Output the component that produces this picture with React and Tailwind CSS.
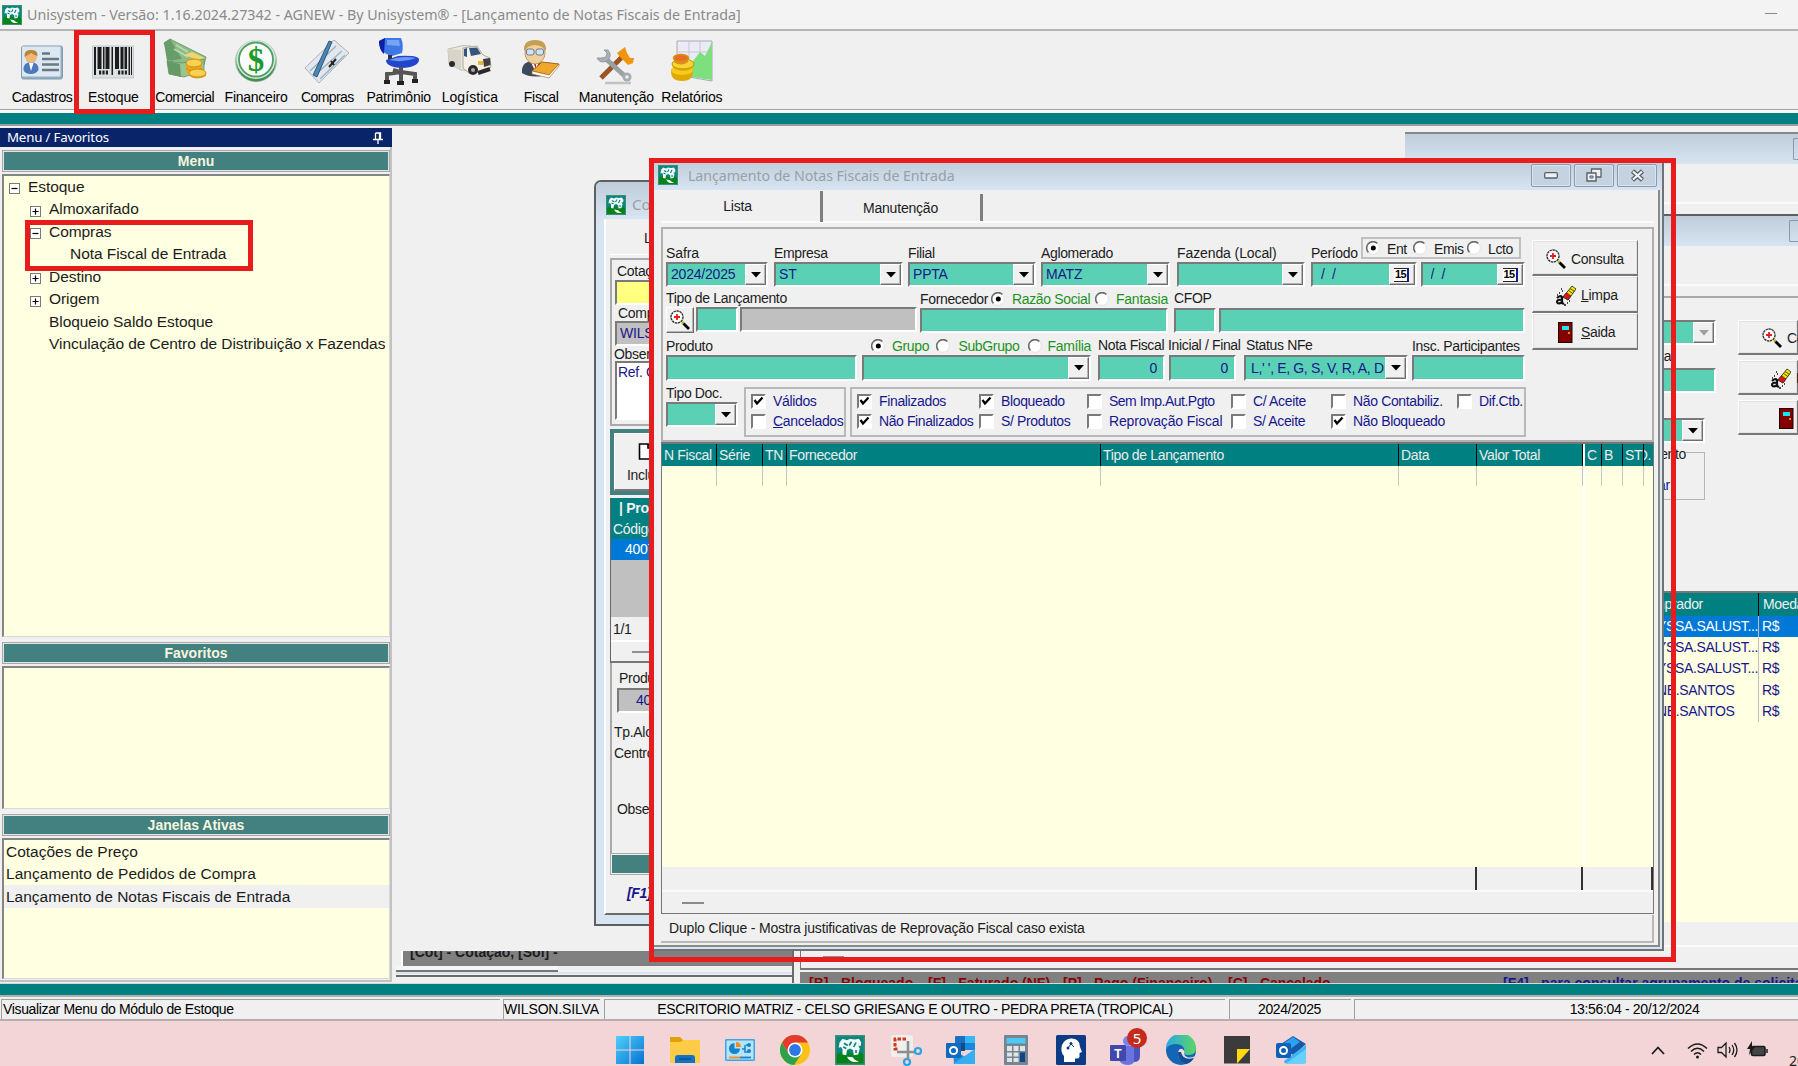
import React from "react";
import clsx from "clsx";

/* ---------- primitives ---------- */

const RAISED = "bg-[#f0f0f0] border border-t-white border-l-white border-r-[#6e6e6e] border-b-[#6e6e6e] shadow-[inset_-1px_-1px_0_#b4b4b4]";
const SUNKEN = "border-2 border-t-[#7a7a7a] border-l-[#7a7a7a] border-r-white border-b-white";

function AppIcon({ size = 20 }) {
  return (
    <svg width={size} height={size} viewBox="0 0 20 20" className="shrink-0">
      <rect width="20" height="20" fill="#3f8f73" />
      <rect x="1" y="1" width="18" height="12" fill="#0a8580" />
      <path d="M1 13Q6 9.500 11 12.500Q15 10 19 13V19H1Z" fill="#04821c" />
      <path d="M3 5L5 2.500L8 3.500L10 2.500L13 3L16 2.500L17.500 5L17 7.500L15.500 7L16.500 9L15.500 13L12.500 13.500L12 10L10 9L8 10L7.500 13.500L5 13L5 9.500L4 8L2.500 8.500Z" fill="#eef8f5" />
      <path d="M6 5.500L8.500 7M11 4.500L9.500 7M14 5L12.500 8M5.500 8L7.500 9M14 10v2" stroke="#0a7f78" strokeWidth="1.100" />
      <path d="M8 14.500Q13 14.500 12.500 16L16 18H12Q9 17 8 14.500Z" fill="#fff" />
    </svg>
  );
}

function Magnifier() {
  return (
    <svg width="20" height="20" viewBox="0 0 20 20" className="shrink-0">
      <circle cx="7" cy="7" r="6" fill="#fff" stroke="#333" strokeWidth="1.4" strokeDasharray="2.4 .6" />
      <path d="M7 4v6M4 7h6" stroke="#e0201c" strokeWidth="1.8" />
      <path d="M12 12l1.5 1.5" stroke="#c9b400" strokeWidth="2.5" />
      <path d="M13.5 13.5L19 19" stroke="#000" strokeWidth="2.8" />
    </svg>
  );
}

function Eraser() {
  return (
    <svg width="21" height="21" viewBox="0 0 21 21" className="shrink-0">
      <path d="M2 13 Q5 10 7 12 L7 18 L9 19 M7 15 Q2 14 2 17 Q3 20 7 17" fill="none" stroke="#111" strokeWidth="2.2" />
      <path d="M4 8h1M7 6h1M2 10h1M9 20h2M12 18h1M14 16h1M6 4h1" stroke="#111" strokeWidth="1.4" />
      <path d="M8 12L17 1L21 4L13 15Z" fill="#f3e400" stroke="#222" strokeWidth=".8" />
      <path d="M8 12L11.500 7.700L16 11L13 15Z" fill="#e0101c" stroke="#222" strokeWidth=".6" />
      <path d="M15 3.500L19.500 6.500M13.500 5.500L17.800 8.500" stroke="#222" strokeWidth=".7" />
    </svg>
  );
}

function Door() {
  return (
    <svg width="15" height="21" viewBox="0 0 15 21" className="shrink-0">
      <rect x=".5" y=".5" width="13.500" height="20" fill="#840000" stroke="#200" />
      <rect x="4" y="4" width="7" height="4" fill="#17e6f5" />
      <circle cx="11" cy="11" r="1" fill="#e5d000" />
    </svg>
  );
}

function CalIcon() {
  return (
    <span className="flex h-[14px] w-[15px] items-center justify-center border-t border-r-2 border-b border-[#222] border-r-[#1a1a8c] bg-white font-['Liberation_Sans'] text-[11px] leading-none font-bold tracking-[-0.5px] text-black">
      15
    </span>
  );
}

function DropButton({ disabled }) {
  return (
    <span className={clsx(RAISED, "flex h-full w-[21px] shrink-0 items-center justify-center")}>
      <svg width="10" height="6" viewBox="0 0 10 6">
        <path d="M0 0h10L5 5.500z" fill={disabled ? "#a0a0a0" : "#000"} />
      </svg>
    </span>
  );
}

function Field({ children, className, tone = "bg-[#5ad1b5]", drop, cal, disabled }) {
  return (
    <div className={clsx(SUNKEN, tone, "flex h-[25px] items-center overflow-hidden pl-[3px] text-[14px] tracking-[-0.2px] whitespace-pre text-[#17178c]", (drop || cal) && "border-r-[#7a7a7a] border-b-[#8a8a8a]", className)}>
      <span className="flex-1 overflow-hidden">{children}</span>
      {drop && <DropButton disabled={disabled} />}
      {cal && (
        <span className={clsx(RAISED, "flex h-full w-[26px] shrink-0 items-center justify-center")}>
          <CalIcon />
        </span>
      )}
    </div>
  );
}

function Label({ children, className }) {
  return <div className={clsx("flex h-[18px] items-center whitespace-nowrap text-[14px] text-[#1c1c1c]", className)}>{children}</div>;
}

function Column({ label, className, children }) {
  return (
    <div className={clsx("flex shrink-0 flex-col justify-end", className)}>
      {label}
      {children}
    </div>
  );
}

function Radio({ on, className }) {
  return (
    <svg width="14" height="14" viewBox="0 0 14 14" className={clsx("shrink-0", className)}>
      <circle cx="7" cy="7" r="6" fill="#fff" />
      <path d="M2.500 11.500A6.200 6.200 0 0 1 11.500 2.500" fill="none" stroke="#6a6a6a" strokeWidth="1.600" />
      <path d="M2.500 11.500A6.200 6.200 0 0 0 11.500 2.500" fill="none" stroke="#e4e4e4" strokeWidth="1" />
      {on && <circle cx="7.300" cy="7" r="2.500" fill="#000" />}
    </svg>
  );
}

function Check({ on, children, className }) {
  return (
    <div className={clsx("flex h-[20px] shrink-0 items-center whitespace-nowrap text-[14px] text-[#17178c]", className)}>
      <span className={clsx(SUNKEN, "mr-[7px] flex size-[15px] shrink-0 items-center justify-center border-r-[#f0f0f0] border-b-[#f0f0f0] bg-white")}>
        {on && (
          <svg width="11" height="10" viewBox="0 0 11 10" className="shrink-0">
            <path d="M1.500 4L4 7.500L9.500 1.500" fill="none" stroke="#000" strokeWidth="2.300" />
          </svg>
        )}
      </span>
      {children}
    </div>
  );
}

function ActionButton({ icon, children, className }) {
  return (
    <div className={clsx("flex items-center border border-t-white border-l-white border-r-[#777] border-b-2 border-b-[#777] bg-[#f0f0f0] pt-[2px] text-[14px] tracking-[-0.3px] text-[#1c1c1c] shadow-[inset_0_0_0_1px_#e2e2e2]", className)}>
      {icon}
      {children}
    </div>
  );
}

function CaptionButton({ children }) {
  return (
    <span className="flex h-[23px] w-[40px] shrink-0 items-center justify-center rounded-[2px] border border-[#8b98b0] bg-[#c5d2e0] shadow-[inset_0_0_0_1px_#d8e3ee]">
      {children}
    </span>
  );
}

/* ---------- toolbar ---------- */

const toolIcons = {
  cadastros: (
    <svg width="44" height="48" viewBox="0 0 44 48">
      <rect x="1.500" y="9" width="41" height="33" rx="2" fill="#93adc0" stroke="#7f9db4" />
      <rect x="2" y="9.500" width="38.500" height="30" rx="1" fill="#dce9f2" />
      <path d="M3.500 33Q3 25.500 11 25Q19 25.500 18.500 33Q16 37 11 37Q5 37 3.500 33Z" fill="#4d78bd" />
      <path d="M9 26l2 8l2.500-8z" fill="#fff" />
      <circle cx="11" cy="20" r="6" fill="#f0b878" />
      <path d="M4.500 20Q4 12.500 11 13Q18 12.500 17.500 19Q14 18 11 16Q8 18 4.500 20Z" fill="#b98434" />
      <path d="M22 16.500h8M22 22h17M22 27.500h17M22 33h17" stroke="#6a7884" strokeWidth="2.400" />
    </svg>
  ),
  estoque: (
    <svg width="44" height="48" viewBox="0 0 44 48">
      <rect x="1.500" y="9" width="41" height="32" fill="#dde1e3" stroke="#c3c9cc" />
      <path d="M3 10h2v28h-2zM6.500 10h4v22h-4zM12 10h1.500v22h-1.500zM14.500 10h4v22h-4zM20.500 10h1.500v28h-1.500zM24 10h4v22h-4zM29.500 10h3v22h-3zM33.500 10h2.500v22h-2.500zM37.500 10h1.500v28h-1.500zM40 10h1v28h-1z" fill="#1c1c1c" />
      <path d="M8 35.500h10M27 35.500h9" stroke="#222" strokeWidth="4" strokeDasharray="2.200 1.200" />
    </svg>
  ),
  comercial: (
    <svg width="46" height="48" viewBox="0 0 46 48">
      <path d="M2 6L8 2L32 14L44 20L42 28L10 26Z" fill="#8ebb88" stroke="#5f9061" strokeWidth=".8" />
      <path d="M2 6L8 2L20 22L5 24Z" fill="#679d68" />
      <path d="M14 8l12 7M12 12l14 8" stroke="#b9d9b0" strokeWidth="1.500" />
      <path d="M5 24L20 26L42 22V33L22 40L7 37Z" fill="#9cc493" stroke="#5f9061" strokeWidth=".8" />
      <path d="M5 24L18 27L19 40L7 37Z" fill="#659a66" />
      <path d="M22 18L30 15L43 21L36 23Z" fill="#f1d76a" />
      <path d="M24 27v8q8 6 16 0v-8z" fill="#eaa91f" />
      <ellipse cx="32" cy="26" rx="8" ry="4" fill="#fad050" stroke="#c88f12" />
      <path d="M24 31q8 6 16 0" stroke="#c88f12" fill="none" />
      <path d="M27 36v3q8 5 17 0v-3z" fill="#e2a11a" />
      <ellipse cx="35.500" cy="36" rx="8.500" ry="4" fill="#fad050" stroke="#c88f12" />
    </svg>
  ),
  financeiro: (
    <svg width="46" height="48" viewBox="0 0 46 48">
      <circle cx="23" cy="24" r="21" fill="#a9bbae" />
      <circle cx="23" cy="25" r="19.500" fill="#3f8f52" />
      <circle cx="23" cy="22.500" r="19.500" fill="#d7e6da" />
      <circle cx="23" cy="22.500" r="17" fill="#fbfdfb" stroke="#4fa163" strokeWidth="1.800" />
      <text x="23" y="33.500" textAnchor="middle" fontFamily="Liberation Serif, serif" fontWeight="bold" fontSize="33" fill="#1c9a2c">$</text>
    </svg>
  ),
  compras: (
    <svg width="48" height="48" viewBox="0 0 48 48">
      <path d="M2 31L31 3L46 16L16 46Z" fill="#e2e8ee" stroke="#a8b1ba" />
      <path d="M7 34L33 9M12 38L39 14M17 42L42 18" stroke="#9db2c4" strokeWidth="1.500" />
      <path d="M10 38L26 4L29 5L14 40Z" fill="#4d86b5" stroke="#174468" strokeWidth=".8" />
      <path d="M26 30l7-8M28 24l3 4" stroke="#222" strokeWidth="2" />
    </svg>
  ),
  patrimonio: (
    <svg width="46" height="50" viewBox="0 0 46 50">
      <path d="M3 5L9 2L25 2Q28 9 26 17L16 20Q3 17 3 5Z" fill="#3f78e6" />
      <path d="M3 5L9 2L8 18Q3 14 3 5Z" fill="#0c1fa8" />
      <path d="M11 4L23 4L24 10L11 9Z" fill="#76a3f4" />
      <path d="M14 19v7" stroke="#333" strokeWidth="4" />
      <path d="M10 24L22 20Q44 19 43 24Q42 31 26 32Q10 31 10 24Z" fill="#2146cd" />
      <path d="M13 24Q25 19 40 22Q28 27 13 24Z" fill="#6d97f2" />
      <path d="M25 31v8M25 36L11 38v6M25 36L39 38v5M25 37v10M24 36L17 34" stroke="#555" strokeWidth="4" fill="none" />
      <path d="M8 46h6M21 47h7M36 45h6" stroke="#222" strokeWidth="4" />
    </svg>
  ),
  logistica: (
    <svg width="46" height="48" viewBox="0 0 46 48">
      <path d="M1 12L16 8.500L24 9V34L14 33L2 27Z" fill="#ece7dc" stroke="#b7b2a7" strokeWidth=".8" />
      <path d="M1 12L14 13V33L2 27Z" fill="#d9d4c8" />
      <path d="M16 11L30 9L36 18L43 21L44 30L38 35L22 36L16 31Z" fill="#f5f1e8" stroke="#9d998f" strokeWidth=".8" />
      <path d="M17 12L20 11V20L17 19ZM22 11L30 10.500L34 17L24 19Z" fill="#35557f" />
      <path d="M36 22L43 21L43.500 28L37 30Z" fill="#3f3f3f" />
      <path d="M31 24h5v4h-5z" fill="#e5b93b" />
      <circle cx="26" cy="33" r="5" fill="#2b2b2b" /><circle cx="26" cy="33" r="2" fill="#aaa" />
      <circle cx="5" cy="27" r="3" fill="#2b2b2b" />
      <path d="M31 36L43 32" stroke="#2b2b2b" strokeWidth="4" />
    </svg>
  ),
  fiscal: (
    <svg width="46" height="48" viewBox="0 0 46 48">
      <path d="M4 36Q3 25 14 24Q25 23 27 32L24 39Q12 41 4 36Z" fill="#3d4a5c" />
      <path d="M13 25L17 34L21 25Z" fill="#fff" /><path d="M16 27h2l0 6z" fill="#b22" />
      <ellipse cx="17" cy="16" rx="10" ry="11" fill="#f0cf9a" stroke="#a98a55" strokeWidth=".8" />
      <path d="M6 14Q5 3 17 3Q29 3 28 14Q24 8 17 8Q10 8 6 14Z" fill="#c3a052" />
      <rect x="8.500" y="12" width="7.500" height="6" rx="2" fill="#cfe3f4" stroke="#6a7f95" />
      <rect x="18" y="12" width="7.500" height="6" rx="2" fill="#cfe3f4" stroke="#6a7f95" />
      <path d="M14 34L24 25L41 27L31 38Z" fill="#f0a62c" stroke="#a0661a" />
      <path d="M14 34L31 38L41 27V29L31 41L14 37Z" fill="#fff" stroke="#a0661a" strokeWidth=".6" />
    </svg>
  ),
  manutencao: (
    <svg width="46" height="48" viewBox="0 0 46 48">
      <path d="M12 46h26" stroke="#c2c2c2" strokeWidth="2.500" />
      <path d="M8 41L29 20" stroke="#9a5520" strokeWidth="5" />
      <path d="M24 16L32 10L34 16L37 21L41 21L40 26L35 28L27 20Z" fill="#f0950e" />
      <path d="M12 21L34 41" stroke="#9aa0a5" strokeWidth="5" />
      <path d="M4 21Q7 27 14 24Q20 19 15 13L11 13L14 16L13 20L9 21Z" fill="#aab0b5" stroke="#8a9095" strokeWidth=".8" />
      <circle cx="34" cy="40" r="4.500" fill="#a5abb0" /><circle cx="34" cy="40" r="1.800" fill="#f0f0f0" />
    </svg>
  ),
  relatorios: (
    <svg width="46" height="48" viewBox="0 0 46 48">
      <path d="M8 4H43V44L8 38Z" fill="#eceaf5" stroke="#aaa8b8" />
      <path d="M20 4v34M31 4v36M8 15h35" stroke="#c9c5da" />
      <path d="M22 38L24 24L31 15L36 19L43 5V43L22 40Z" fill="#7de07d" />
      <path d="M2 35q0 9 11 9t11-9v-3H2z" fill="#e0a800" />
      <ellipse cx="13" cy="33" rx="11" ry="5" fill="#f4cb1e" />
      <path d="M3 26q0 8 11 8t11-8z" fill="#e5ae05" />
      <ellipse cx="14" cy="27" rx="11" ry="5" fill="#f8d534" stroke="#c79200" />
      <path d="M5 21v4q7 5 14 0v-4z" fill="#e58a1c" />
      <ellipse cx="12" cy="21" rx="7.500" ry="3.500" fill="#ee6a24" stroke="#cf9410" strokeWidth="1.500" />
    </svg>
  ),
};

const tools = [
  ["cadastros", "Cadastros", "w-[71.300px]", "tracking-[-0.350px]"],
  ["estoque", "Estoque", "w-[71.300px]", "tracking-[-0.100px]"],
  ["comercial", "Comercial", "w-[71.300px]", "tracking-[-0.450px]"],
  ["financeiro", "Financeiro", "w-[71.300px]", "tracking-[-0.250px]"],
  ["compras", "Compras", "w-[71.300px]", "tracking-[-0.600px]"],
  ["patrimonio", "Patrimônio", "w-[71.300px]", "tracking-[-0.250px]"],
  ["logistica", "Logística", "w-[71.300px]", "tracking-[0.050px]"],
  ["fiscal", "Fiscal", "w-[71.300px]", "tracking-[-0.300px]"],
  ["manutencao", "Manutenção", "w-[79px]", "tracking-[-0.200px]"],
  ["relatorios", "Relatórios", "w-[72px]", "tracking-[-0.200px]"],
];

function Toolbar() {
  return (
    <div className="flex h-[81px] shrink-0 border-t-2 border-b border-t-[#b5b5b5] border-b-[#a5a5a5] bg-[#f0f0f0] pl-[6.500px]">
      {tools.map(([id, name, w, track]) => (
        <div key={id} className={clsx("relative flex flex-col items-center pt-[5px]", w)}>
          <div className="flex h-[50px] items-center justify-center">{toolIcons[id]}</div>
          <div className={clsx("mt-[1px] text-[14px] leading-[20px] whitespace-nowrap text-black", track)}>{name}</div>
          {id === "estoque" && <div className="absolute -top-px -left-[4px] h-[84px] w-[81px] border-5 border-[#e81c1c]" />}
        </div>
      ))}
    </div>
  );
}

/* ---------- left dock ---------- */

function SectionTitle({ children }) {
  return (
    <div className="ml-[2px] flex h-[22px] w-[388px] shrink-0 items-center justify-center border border-[#a8a8a8] bg-[#438080] text-[14px] font-bold text-[#f6f6dc] shadow-[inset_0_0_0_1px_#e4e4e4]">
      {children}
    </div>
  );
}

const tree = [
  ["−", "Estoque", "pl-[5px]"],
  ["+", "Almoxarifado", "pl-[26px]"],
  ["−", "Compras", "pl-[26px]"],
  ["", "Nota Fiscal de Entrada", "pl-[66px]"],
  ["+", "Destino", "pl-[26px]"],
  ["+", "Origem", "pl-[26px]"],
  ["", "Bloqueio Saldo Estoque", "pl-[45px]"],
  ["", "Vinculação de Centro de Distribuição x Fazendas", "pl-[45px]"],
];

function SideDock() {
  const list = "ml-[2px] w-[388px] shrink-0 border border-t-2 border-l-2 border-t-[#858585] border-l-[#858585] border-r-[#d8d8d8] border-b-[#d8d8d8] bg-[#ffffe1]";
  return (
    <div className="flex w-[392px] shrink-0 flex-col">
      <div className="mt-[2px] flex h-[19px] shrink-0 items-center justify-between bg-[#0a246a] pt-[1px] pr-[9px] pl-[7px] text-white">
        <span className="font-['Noto_Sans'] text-[13.300px] tracking-[-0.200px]">Menu / Favoritos</span>
        <svg width="10" height="12" viewBox="0 0 10 12">
          <path d="M2.500 1h5v6M2.500 1v6M0 7.500h10M5 8v4M6.500 1v6" fill="none" stroke="#fff" strokeWidth="1.300" />
        </svg>
      </div>
      <div className="flex h-[835px] flex-col border-r-2 border-b-2 border-[#c2c2c2] pt-[3px]">
        <SectionTitle>Menu</SectionTitle>
        <div className={clsx(list, "relative mt-[2px] h-[463px] overflow-hidden")}>
          {tree.map(([mark, name, pad]) => (
            <div key={name} className={clsx("flex h-[22.500px] items-center text-[15.500px] tracking-[-0.060px] whitespace-nowrap text-[#1c1c1c]", pad)}>
              {mark && (
                <svg width="11" height="11" viewBox="0 0 11 11" className="mt-[3px] mr-[8px] shrink-0">
                  <rect x=".5" y=".5" width="10" height="10" fill="#fff" stroke="#7a7a7a" />
                  <path d={mark === "+" ? "M2.500 5.500h6M5.500 2.500v6" : "M2.500 5.500h6"} stroke="#000" strokeWidth="1.200" />
                </svg>
              )}
              <span className="-mt-[2px]">{name}</span>
            </div>
          ))}
          <div className="absolute top-[44px] left-[21px] h-[51px] w-[228px] border-5 border-[#e81c1c]" />
        </div>
        <div className="mt-[5px] flex flex-col">
          <SectionTitle>Favoritos</SectionTitle>
          <div className={clsx(list, "mt-[2px] h-[143px]")} />
        </div>
        <div className="mt-[5px] flex flex-col">
          <SectionTitle>Janelas Ativas</SectionTitle>
          <div className={clsx(list, "mt-[2px] h-[141px] text-[15.500px] whitespace-nowrap text-[#1c1c1c]")}>
            <div className="flex h-[22.500px] items-center pl-[2px]">Cotações de Preço</div>
            <div className="flex h-[22.500px] items-center pl-[2px] tracking-[0.060px]">Lançamento de Pedidos de Compra</div>
            <div className="flex h-[22.500px] items-center bg-[#f0f0f0] pl-[2px]">Lançamento de Notas Fiscais de Entrada</div>
          </div>
        </div>
      </div>
    </div>
  );
}

/* ---------- background windows ---------- */

function QuoteWindow() {
  return (
    <div className="absolute top-[54px] left-[594px] flex h-[746px] w-[58px] flex-col overflow-hidden rounded-tl-[7px] border-2 border-r-0 border-[#5c5f63] bg-[#d7e4f2]">
      <div className="flex h-[37px] shrink-0 items-center bg-gradient-to-b from-[#bfcddb] to-[#d7e4f2] pt-[8px] pl-[10px]">
        <AppIcon />
        <span className="ml-[6px] font-['Noto_Sans'] text-[15px] text-[#9a9fa6]">Cotações</span>
      </div>
      <div className="ml-[8px] flex h-[696px] shrink-0 flex-col border-b-2 border-l-2 border-b-[#6b6b6b] border-l-white bg-[#f0f0f0] pl-[4px] text-[14px] tracking-[-0.300px] whitespace-nowrap text-[#1c1c1c]">
        <div className="flex h-[36px] shrink-0 items-center border-b border-[#fff] pt-[4px] pl-[34px]">Lista</div>
        <div className="mt-[3px] flex h-[168px] shrink-0 flex-col border-2 border-r-0 border-[#a9a9a9] pl-[3px]">
          <div className="mt-[1px] h-[19px] pl-[2px]">Cotação</div>
          <Field tone="bg-[#ffff80]" className="shrink-0" />
          <div className="mt-[-2px] h-[18px] pl-[3px]">Comprador</div>
          <Field tone="bg-[#c0c0c0]" className="shrink-0 pl-[1px]">WILSON</Field>
          <div className="mt-[-2px] -ml-px h-[17px]">Observação</div>
          <div className={clsx(SUNKEN, "h-[59px] shrink-0 bg-white pl-[1px] leading-[19px] text-[#17178c]")}>Ref. COT</div>
        </div>
        <div className="mt-[3px] flex h-[66px] shrink-0 border-4 border-r-0 border-[#438080]">
          <div className="flex flex-1 flex-col border-t border-l border-b-2 border-t-white border-l-white border-b-[#777] pt-[9px] pl-[12px]">
            <svg width="20" height="17" viewBox="0 0 20 17" className="ml-[11px] shrink-0">
              <path d="M1.500 1H10V5H15V16H1.500ZM10 1L15 5" fill="#fff" stroke="#000" strokeWidth="1.600" />
            </svg>
            <span className="mt-[5px]">Incluir</span>
          </div>
        </div>
        <div className="mt-[3px] flex shrink-0 flex-col border-l border-[#666]">
          <div className="h-[21px] bg-[#008080] pl-[8px] text-[14px] font-bold text-[#f0f0f0]">| Produtos</div>
          <div className="h-[20px] bg-[#008080] pl-[2px] leading-[20px] text-[#f0f0f0]">Código</div>
          <div className="h-[21px] bg-[#0078d7] pl-[14px] leading-[21px] text-white">4007</div>
          <div className="h-[57px] bg-[#c0c0c0]" />
          <div className="h-[25px] border-b-2 border-white pl-[2px] leading-[24px]">1/1</div>
          <div className="flex h-[21px] items-center border-b-2 border-[#777] pl-[21px]">
            <div className="h-[2px] w-[40px] bg-[#909090]" />
          </div>
        </div>
        <div className="flex h-[190px] shrink-0 flex-col border-l-2 border-[#a9a9a9] pl-[2px]">
          <div className="mt-[5px] h-[20px] pl-[5px]">Produto</div>
          <Field tone="bg-[#c0c0c0]" className="ml-[3px] shrink-0 pl-[17px]">4007</Field>
          <div className="mt-[9px] h-[21px]">Tp.Aloc.</div>
          <div className="h-[56px]">Centro</div>
          <div className="pl-[3px]">Observ.</div>
        </div>
        <div className="flex h-[22px] shrink-0 border border-[#a9a9a9] bg-[#438080] shadow-[inset_0_0_0_1px_#f0f0f0]" />
        <div className="mt-[8px] pl-[17px] font-bold text-[#17178c] italic">[F1]</div>
      </div>
    </div>
  );
}

const buyers = [
  ["YSSA.SALUST...", "R$"],
  ["YSSA.SALUST...", "R$"],
  ["YSSA.SALUST...", "R$"],
  ["NE.SANTOS", "R$"],
  ["NE.SANTOS", "R$"],
];

function OrdersWindow() {
  return (
    <div className="absolute top-[88px] left-[1600px] flex h-[773px] w-[198px] flex-col overflow-hidden border-t-2 border-[#5c5f63] bg-[#f0f0f0] text-[14px] tracking-[-0.350px] whitespace-nowrap text-[#1c1c1c]">
      <div className="flex h-[30px] shrink-0 justify-end bg-gradient-to-b from-[#bfcddb] to-[#d7e4f2] pt-[4px]">
        <span className="h-[22px] w-[9px] rounded-l-[2px] border border-r-0 border-[#8b98b0]" />
      </div>
      <div className="h-[40px] shrink-0 border-b-2 border-[#fafafa]" />
      <div className="mt-[10px] flex h-[295px] shrink-0 justify-between border-t-2 border-[#a9a9a9]">
        <div className="flex w-[116px] flex-col pt-[22px]">
          <Field drop disabled className="shrink-0" />
          <div className="flex h-[23px] items-center pl-[46px]">Total</div>
          <Field className="shrink-0 border-r-[#888] border-b-[#888]" />
          <Field drop className="mt-[25px] mr-[11px] shrink-0" />
          <div className="relative mt-[9px] mr-[11px] flex h-[48px] items-end border border-[#b5b5b5] pb-[3px] pl-[57px]">
            <span className="text-[#17178c]">ar</span>
            <span className="absolute -top-[9px] right-[18px] bg-[#f0f0f0]">Pagamento</span>
          </div>
        </div>
        <div className="flex w-[60px] flex-col gap-[5px] pt-[22px]">
          <ActionButton className="h-[35px] shrink-0 pl-[23px]" icon={<Magnifier />}><span className="ml-[5px]">Consulta</span></ActionButton>
          <ActionButton className="h-[35px] shrink-0 pl-[31px]" icon={<Eraser />}><span className="ml-[5px]">Limpa</span></ActionButton>
          <ActionButton className="h-[35px] shrink-0 pl-[40px]" icon={<Door />} />
        </div>
      </div>
      <div className="grid shrink-0 grid-cols-[159px_1fr] border-t-2 border-[#777] text-[#f0f0f0]">
        <div className="flex h-[23px] items-center border-r border-black bg-[#008080] pl-[36px]">Comprador</div>
        <div className="flex items-center bg-[#008080] pl-[4px]">Moeda</div>
      </div>
      <div className="flex h-[306px] shrink-0 flex-col bg-[#ffffe1]">
        {buyers.map(([who, coin], i) => (
          <div key={i} className={clsx("grid h-[21.200px] grid-cols-[159px_1fr] items-center", i === 0 ? "bg-[#0078d7] text-white" : "text-[#17178c]")}>
            <div className={clsx("flex h-full items-center border-r border-[#c0c0c0]", i < 3 ? "justify-end" : "pl-[57px]")}>{who}</div>
            <div className="pl-[3px]">{coin}</div>
          </div>
        ))}
      </div>
      <div className="h-[25px] shrink-0 border-b-2 border-[#fafafa]" />
    </div>
  );
}

function BackWindows() {
  return (
    <>
      <div className="absolute top-[6px] left-[1405px] flex h-[82px] w-[393px] flex-col border-t-2 border-[#85898e] bg-[#f0f0f0]">
        <div className="flex h-[30px] shrink-0 justify-end bg-gradient-to-b from-[#bfcddb] to-[#d7e4f2] pt-[4px]">
          <span className="h-[22px] w-[5px] rounded-l-[2px] border border-r-0 border-[#8b98b0]" />
        </div>
        <div className="h-[40px] border-b-2 border-[#fafafa]" />
      </div>
      <OrdersWindow />
      {/* lower edges of the windows that sit behind */}
      <div className="absolute top-[825px] left-[396px] flex h-[26px] w-[396px] flex-col overflow-hidden border-b-2 border-[#6b6b6b]">
        <div className="ml-[5px] flex h-[15px] shrink-0 overflow-hidden border-l-2 border-white bg-[#808080] pl-[7px]">
          <span className="-mt-[9px] text-[14px] leading-[20px] font-bold whitespace-pre text-[#1c1c1c]">[Cot] - Cotação, [Sol] - </span>
        </div>
        <div className="h-[6px] w-[162px] shrink-0 border-b-2 border-[#777] bg-[#f6f6f6]" />
        <div className="h-[2px] bg-[#d7e4f2]" />
      </div>
      <div className="absolute top-[825px] left-[792px] flex h-[33px] w-[1006px] flex-col border-l-2 border-[#6b6b6b] bg-[#f0f0f0] pl-[6px]">
        <div className="flex h-[19px] shrink-0 border-b-2 border-l border-[#777] pt-[5px] pl-[22px]">
          <div className="h-[2px] w-[21px] bg-[#909090]" />
        </div>
        <div className="mt-[2px] flex h-[12px] shrink-0 overflow-hidden bg-[#808080] pl-[9px] text-[14px] leading-[20px] font-bold whitespace-nowrap text-[#8b0000]">
          <span className="mt-[1px] w-[119px] shrink-0">[B] - Bloqueado</span>
          <span className="mt-[1px] w-[135px] shrink-0">[F] - Faturado (NF)</span>
          <span className="mt-[1px] w-[165px] shrink-0">[P] - Pago (Financeiro)</span>
          <span className="mt-[1px] w-[275px] shrink-0">[C] - Cancelado</span>
          <span className="mt-[1px] shrink-0 text-[#17178c]">[F4] - para consultar agrupamento de solicitações</span>
        </div>
      </div>
    </>
  );
}

/* ---------- invoice window ---------- */

const gridHead = ["N Fiscal", "Série", "TN", "Fornecedor", "Tipo de Lançamento", "Data", "Valor Total", "C", "B", "ST", "D."];
const GRID_COLS = "grid grid-cols-[55px_46px_24px_314px_298px_78px_106px_19px_21px_21px_1fr]";

function InvoiceForm() {
  return (
    <div className="flex h-[215px] shrink-0 justify-between border-2 border-[#b0b0b0] pr-[14px] pl-[3px] tracking-[-0.350px]">
      <div className="flex w-[861px] flex-col">
        <div className="mt-[8px] flex h-[50px] items-end">
          <Column className="w-[102px]" label={<Label className="tracking-[-0.100px]">Safra</Label>}><Field drop>2024/2025</Field></Column>
          <Column className="ml-[6px] w-[129px]" label={<Label>Empresa</Label>}><Field drop>ST</Field></Column>
          <Column className="ml-[5px] w-[128px]" label={<Label>Filial</Label>}><Field drop>PPTA</Field></Column>
          <Column className="ml-[5px] w-[129px]" label={<Label>Aglomerado</Label>}><Field drop>MATZ</Field></Column>
          <Column className="ml-[7px] w-[128px]" label={<Label className="tracking-[-0.100px]">Fazenda (Local)</Label>}><Field drop /></Column>
          <Column
            className="ml-[6px] w-[214px]"
            label={
              <div className="flex items-end">
                <Label className="w-[50px]">Período</Label>
                <div className="mb-[3px] flex h-[22px] w-[160px] items-center border-2 border-[#c0c0c0] pl-[3px] text-[14px] tracking-[-0.400px] text-[#1c1c1c]">
                  <Radio on /><span className="mt-[2px] ml-[7px] w-[26px]">Ent</span>
                  <Radio /><span className="mt-[2px] ml-[7px] w-[33px]">Emis</span>
                  <Radio /><span className="mt-[2px] ml-[7px]">Lcto</span>
                </div>
              </div>
            }
          >
            <div className="flex gap-[4px]">
              <Field cal className="w-[106px] pl-[8px]">/  /</Field>
              <Field cal className="w-[105px] pl-[8px]">/  /</Field>
            </div>
          </Column>
        </div>

        <div className="flex h-[46px] items-end">
          <Column className="w-[251px]" label={<Label>Tipo de Lançamento</Label>}>
            <div className="flex gap-[2px]">
              <span className={clsx(RAISED, "flex h-[26px] w-[28px] items-center justify-center")}><Magnifier /></span>
              <Field className="w-[42px]" />
              <Field className="w-[178px]" tone="bg-[#c0c0c0]" />
            </div>
          </Column>
          <Column
            className="ml-[3px] w-[248px]"
            label={
              <Label>
                <span className="w-[71px]">Fornecedor</span>
                <Radio on /><span className="ml-[7px] w-[83px] text-[#1d931d]">Razão Social</span>
                <Radio /><span className="ml-[7px] tracking-[-0.200px] text-[#1d931d]">Fantasia</span>
              </Label>
            }
          >
            <Field />
          </Column>
          <Column className="ml-[6px] w-[42px]" label={<Label className="-mt-px mb-px">CFOP</Label>}><Field /></Column>
          <Column className="ml-[3px] w-[306px]"><Field /></Column>
        </div>

        <div className="flex h-[48px] items-end">
          <Column className="w-[191px]" label={<Label>Produto</Label>}><Field className="h-[26px]" /></Column>
          <Column
            className="ml-[5px] w-[229px]"
            label={
              <Label className="pl-[9px]">
                <Radio on /><span className="ml-[7px] w-[45px] text-[#1d931d]">Grupo</span>
                <Radio /><span className="ml-[8px] w-[70px] text-[#1d931d]">SubGrupo</span>
                <Radio /><span className="ml-[6px] text-[#1d931d]">Família</span>
              </Label>
            }
          >
            <Field drop className="h-[26px]" />
          </Column>
          <Column className="ml-[7px] w-[67px]" label={<Label className="mb-px">Nota Fiscal</Label>}><Field className="h-[26px] pr-[6px] text-right">0</Field></Column>
          <Column className="ml-[4px] w-[67px]" label={<Label className="-ml-px mb-px">Inicial / Final</Label>}><Field className="h-[26px] pr-[6px] text-right">0</Field></Column>
          <Column className="ml-[8px] w-[164px]" label={<Label className="mb-px pl-[2px]">Status NFe</Label>}><Field drop className="h-[26px] pl-[5px] tracking-[-0.350px]">L,' ', E, G, S, V, R, A, D</Field></Column>
          <Column className="ml-[4px] w-[113px]" label={<Label>Insc. Participantes</Label>}><Field className="h-[26px]" /></Column>
        </div>

        <div className="flex">
          <Column className="mt-[3px] w-[72px] justify-start" label={<Label>Tipo Doc.</Label>}><Field drop /></Column>
          <div className="mt-[6px] ml-[6px] flex h-[50px] w-[102px] shrink-0 flex-col border-2 border-[#b8b8b8] pt-[2px] pl-[5px]">
            <Check on>Válidos</Check>
            <Check><span><u>C</u>ancelados</span></Check>
          </div>
          <div className="mt-[6px] ml-[4px] grid h-[50px] w-[676px] shrink-0 grid-cols-[122px_108px_144px_100px_126px_60px] grid-rows-[20px_20px] border-2 border-[#b8b8b8] pt-[2px] pl-[5px]">
            <Check on>Finalizados</Check>
            <Check on>Bloqueado</Check>
            <Check className="tracking-[-0.500px]">Sem Imp.Aut.Pgto</Check>
            <Check>C/ Aceite</Check>
            <Check>Não Contabiliz.</Check>
            <Check>Dif.Ctb.</Check>
            <Check on className="tracking-[-0.400px]">Não Finalizados</Check>
            <Check>S/ Produtos</Check>
            <Check className="tracking-[-0.150px]">Reprovação Fiscal</Check>
            <Check>S/ Aceite</Check>
            <Check on>Não Bloqueado</Check>
          </div>
        </div>
      </div>

      <div className="mt-[11px] flex w-[106px] flex-col">
        <ActionButton className="h-[36px] pl-[13px]" icon={<Magnifier />}><span className="mt-[1px] ml-[5px]">Consulta</span></ActionButton>
        <ActionButton className="h-[37px] pl-[22px]" icon={<Eraser />}><span className="mt-[1px] ml-[5px]"><u>L</u>impa</span></ActionButton>
        <ActionButton className="h-[37px] pl-[25px]" icon={<Door />}><span className="mt-[1px] ml-[8px]"><u>S</u>aida</span></ActionButton>
      </div>
    </div>
  );
}

function InvoiceWindow() {
  return (
    <div className="absolute top-[34px] left-[652px] flex h-[791px] w-[1012px] flex-col border-r-2 border-b-2 border-[#6f7276] bg-[#d7e4f2]">
      <div className="flex h-[30px] shrink-0 items-center justify-between bg-gradient-to-b from-[#bfcddb] to-[#d7e4f2] pr-[5px] pl-[6px]">
        <div className="flex items-center">
          <AppIcon />
          <span className="mt-[2px] ml-[10px] font-['Noto_Sans'] text-[14.200px] tracking-[-0.060px] whitespace-nowrap text-[#9a9fa6]">Lançamento de Notas Fiscais de Entrada</span>
        </div>
        <div className="flex gap-[3px]">
          <CaptionButton>
            <svg width="14" height="7" viewBox="0 0 14 7"><rect x=".7" y=".7" width="12.600" height="5.300" rx="1" fill="#eef2f6" stroke="#5a6068" strokeWidth="1.300" /></svg>
          </CaptionButton>
          <CaptionButton>
            <svg width="16" height="14" viewBox="0 0 16 14">
              <path d="M5.500 1h9.500v8h-9.500z" fill="#eef2f6" stroke="#5a6068" strokeWidth="1.300" />
              <path d="M1 5h9v8h-9z" fill="#eef2f6" stroke="#5a6068" strokeWidth="1.400" />
              <path d="M4 8h3v2h-3z" fill="#c5d2e0" stroke="#5a6068" />
            </svg>
          </CaptionButton>
          <CaptionButton>
            <svg width="15" height="13" viewBox="0 0 15 13">
              <path d="M2.500 2L12.500 11M12.500 2L2.500 11" stroke="#5a6068" strokeWidth="4.600" />
              <path d="M3 2.500L12 10.500M12 2.500L3 10.500" stroke="#eef2f6" strokeWidth="2.200" />
            </svg>
          </CaptionButton>
        </div>
      </div>

      <div className="mr-[2px] flex h-[757px] flex-col border-r-2 border-b-2 border-l-2 border-r-[#8a8a8a] border-b-[#8a8a8a] border-l-white bg-[#f0f0f0] pr-[4px] pl-[7px]">
        <div className="flex h-[33px] shrink-0 items-start border-b-2 border-[#fafafa] text-[14px] tracking-[-0.200px] text-[#1c1c1c]">
          <div className="mt-[1px] flex h-[31px] w-[162px] items-center justify-center border-r-3 border-[#7e7e7e] pr-[6px] pb-[1px]">Lista</div>
          <div className="mt-[4px] flex h-[27px] w-[160px] items-center justify-center border-r-3 border-[#7e7e7e] pt-[1px] pr-[2px]">Manutenção</div>
        </div>
        <div className="mt-[4px] flex flex-col">
          <InvoiceForm />
        </div>
        <div className="flex h-[472px] shrink-0 flex-col border border-t-2 border-[#777]">
          <div className={clsx(GRID_COLS, "h-[22px] shrink-0 bg-[#008080] text-[14px] tracking-[-0.350px] text-[#ececec]")}>
            {gridHead.map((h, i) => (
              <div key={h} className={clsx("flex items-center overflow-hidden pt-[1px] pl-[2px] whitespace-nowrap", i < 10 ? "border-r border-black" : "justify-end pr-[2px]", i === 7 && "border-l-2 border-l-white")}>{h}</div>
            ))}
          </div>
          <div className={clsx(GRID_COLS, "h-[401px] shrink-0 bg-[#ffffe1]")}>
            {gridHead.map((h, i) => (
              <div key={h} className={clsx(i === 7 && "border-l-2 border-white")}>
                <div className={clsx("h-[20px]", i < 10 && "border-r border-[#c4c4c4]")} />
              </div>
            ))}
          </div>
          <div className={clsx(GRID_COLS, "h-[25px] shrink-0 border-b-2 border-[#fafafa]")}>
            {gridHead.map((h, i) => (
              <div key={h} className={clsx((i === 5 || i === 6 || i === 10) && "border-r-2 border-[#333]")} />
            ))}
          </div>
          <div className="flex flex-1 items-center pl-[20px]"><div className="h-[2px] w-[22px] bg-[#8a8a8a]" /></div>
        </div>
        <div className="mt-[1px] flex h-[28px] shrink-0 items-center border-r-2 border-b-2 border-[#b8b8b8] pl-[8px] text-[14px] tracking-[-0.180px] text-[#1c1c1c]">
          Duplo Clique - Mostra justificativas de Reprovação Fiscal caso exista
        </div>
      </div>
    </div>
  );
}

/* ---------- taskbar ---------- */

const apps = [
  <svg width="30" height="30" viewBox="0 0 30 30">
    <defs><linearGradient id="win" x1="0" y1="0" x2="1" y2="1"><stop offset="0" stopColor="#4fd0fb" /><stop offset="1" stopColor="#0672d2" /></linearGradient></defs>
    <path d="M1 1h13.500v13.500H1zM15.500 1H29v13.500H15.500zM1 15.500h13.500V29H1zM15.500 15.500H29V29H15.500z" fill="url(#win)" />
  </svg>,
  <svg width="30" height="30" viewBox="0 0 30 30">
    <path d="M0 3q0-1 1-1h9l3 3v4H0z" fill="#e0a008" />
    <path d="M0 7h11l2-2h16q1 0 1 1v21q0 1-1 1H1q-1 0-1-1z" fill="#fdcb45" />
    <path d="M5 28v-5q0-3 3-3h14q3 0 3 3v5z" fill="#1172c4" /><path d="M9 24h12" stroke="#0b4f91" strokeWidth="1.500" />
  </svg>,
  <svg width="30" height="30" viewBox="0 0 30 30">
    <rect x=".7" y="4.700" width="28.600" height="20.600" rx="1" fill="#b4e3fa" stroke="#3ca5df" strokeWidth="1.600" />
    <path d="M9.500 13.500V8A5.500 5.500 0 1 0 15 13.500Z" fill="#1583cc" /><path d="M11 12V7A5 5 0 0 1 16 12Z" fill="#f58a1c" />
    <path d="M17 14h3M20 10v8M21 10h4M21 17h4" stroke="#1583cc" strokeWidth="1.500" /><circle cx="24" cy="10" r="2" fill="#1583cc" /><circle cx="24" cy="16" r="2" fill="#1583cc" />
    <path d="M4 22.500h11" stroke="#f58a1c" strokeWidth="1.800" /><path d="M15 22.500h11" stroke="#1583cc" strokeWidth="1.800" />
  </svg>,
  <svg width="30" height="30" viewBox="0 0 30 30">
    <circle cx="15" cy="15" r="15" fill="#fbc116" />
    <path d="M2 7.500A15 15 0 0 1 28 7.500H15L8.500 18.700Z" fill="#e33b2e" />
    <path d="M2 7.500A15 15 0 0 0 14 30L21.500 18.700L8.500 18.700Z" fill="#2da24c" />
    <circle cx="15" cy="15" r="7.500" fill="#fff" /><circle cx="15" cy="15" r="5.900" fill="#2c76e8" />
  </svg>,
  <AppIcon size={30} />,
  <svg width="32" height="32" viewBox="0 0 32 32">
    <rect x="1" y="1" width="22" height="22" rx="2" fill="#f1eeee" />
    <path d="M16 5H5V15H9" fill="none" stroke="#cf3b14" strokeWidth="3" strokeDasharray="3.500 1.500" />
    <path d="M18 7V24M7 18H25" stroke="#8a8f94" strokeWidth="2.600" />
    <circle cx="28" cy="17" r="3" fill="none" stroke="#2aa2e4" strokeWidth="2.200" /><circle cx="17" cy="28" r="3" fill="none" stroke="#2aa2e4" strokeWidth="2.200" />
  </svg>,
  <svg width="30" height="30" viewBox="0 0 30 30">
    <path d="M9 2q0-1 1-1h18q1 0 1 1v13H9z" fill="#1b6fc4" /><path d="M19 1h9q1 0 1 1v7H19z" fill="#35b8f5" /><path d="M9 8h10v8H9z" fill="#124a8c" /><path d="M19 8h10v7H19z" fill="#1a87dc" />
    <path d="M7 14l12 8l10-8v14q0 1-1 1H8z" fill="#1b8fe0" /><path d="M7 29L29 14v14q0 1-1 1z" fill="#35aef2" />
    <rect x="0" y="8" width="15" height="15" rx="1" fill="#0f6cbd" /><circle cx="7.500" cy="15.500" r="3.600" fill="none" stroke="#fff" strokeWidth="2" />
  </svg>,
  <svg width="26" height="30" viewBox="0 0 26 30">
    <rect x="1" y="0" width="24" height="30" rx="1" fill="#78848f" /><rect x="3.500" y="3" width="19" height="5.500" fill="#4ccaf5" />
    <path d="M4 11h5v5H4zM10.500 11h5v5h-5zM17 11h5v5h-5zM4 17.500h5v4H4zM10.500 17.500h5v4h-5zM4 23h5v4H4zM10.500 23h5v4h-5z" fill="#dfe4e8" /><path d="M17 17.500h5V27h-5z" fill="#0f4683" />
  </svg>,
  <svg width="30" height="30" viewBox="0 0 30 30">
    <rect width="30" height="30" rx="1.500" fill="#0d3a85" />
    <path d="M8 27V21Q4 17 6 10Q9 3 16 3.500Q24 4 24 12L26 17L23.500 18V22Q23 24 19 23.500V27Z" fill="#fff" />
    <path d="M12 13l3-4l3 3" stroke="#0d3a85" fill="none" /><circle cx="12" cy="13" r="1.500" fill="#0d3a85" /><circle cx="15" cy="8.500" r="1.500" fill="#0d3a85" />
  </svg>,
  <svg width="42" height="44" viewBox="0 0 42 44" className="overflow-visible">
    <circle cx="23" cy="13" r="5" fill="#7b83eb" /><circle cx="31" cy="16" r="4" fill="#5059c9" />
    <path d="M14 18h16v12q0 7-7 7q-9 0-9-7z" fill="#6b73df" /><path d="M29 19h6v9q0 6-6 6z" fill="#4b53bc" />
    <rect x="5" y="17" width="16" height="16" rx="1" fill="#4049ab" />
    <text x="13" y="29.500" textAnchor="middle" fontFamily="Liberation Sans, sans-serif" fontWeight="bold" fontSize="12" fill="#fff">T</text>
    <circle cx="32" cy="10" r="10" fill="#c42b1c" />
    <text x="32" y="15.500" textAnchor="middle" fontFamily="Noto Sans, sans-serif" fontSize="15" fill="#fff">5</text>
  </svg>,
  <svg width="30" height="30" viewBox="0 0 30 30">
    <defs><linearGradient id="edge" x1="0" y1="0" x2="1" y2="0"><stop offset="0" stopColor="#2aa8e4" /><stop offset="1" stopColor="#5bd663" /></linearGradient></defs>
    <circle cx="15" cy="15" r="15" fill="#1465b4" />
    <path d="M0 14A15 15 0 0 1 30 13Q30 20 23 20Q17 20 18.500 16Q18 9 10 9Q3 9 0 14Z" fill="url(#edge)" />
    <path d="M18.500 16Q17 21 22 22.500Q26 23 29 21Q26 27 19 28Q11 25 12 17Q14 11 18.500 16Z" fill="#f6d9da" />
    <path d="M12 17Q11 26 20 29Q25 28 28 23Q17 26 15 17Z" fill="#0c4f9a" />
  </svg>,
  <svg width="28" height="30" viewBox="0 0 28 30">
    <path d="M1 1h26v13L14 28.500H1z" fill="#3b3b3b" /><path d="M27 14v14.500H14z" fill="#3b3b3b" /><path d="M14 28.500V14h13z" fill="#ffd80d" />
  </svg>,
  <svg width="31" height="30" viewBox="0 0 31 30">
    <path d="M5 9L17 1L30 9L18 20L5 16z" fill="#1659a8" /><path d="M8 8L17 2L24 7L13 15z" fill="#2ba0ef" />
    <path d="M30 10V27Q30 28.500 28 28.500H10Q8 28.500 8 26L16 20Z" fill="#3fb4f4" /><path d="M10 28.500L30 14V27q0 1.500-2 1.500z" fill="#67d0fb" />
    <rect y="8" width="15" height="15" rx="2" fill="#0f61b5" /><circle cx="7.500" cy="15.500" r="3.500" fill="none" stroke="#fff" strokeWidth="2" />
  </svg>,
];

function Taskbar() {
  return (
    <div className="flex h-[45px] shrink-0 items-start justify-between overflow-hidden bg-[#f4d5d7]">
      <div className="flex pl-[602px]">
        {apps.map((a, i) => (
          <div key={i} className="flex h-[57px] w-[55.200px] shrink-0 items-center justify-center pt-[1px]">{a}</div>
        ))}
      </div>
      <div className="flex h-[57px] shrink-0 items-center pt-[1px] text-[#1c1c1c]">
        <svg width="14" height="9" viewBox="0 0 14 9"><path d="M1 8L7 1.500L13 8" fill="none" stroke="currentColor" strokeWidth="1.800" /></svg>
        <svg width="21" height="17" viewBox="0 0 21 17" className="ml-[22px]">
          <path d="M1 6.500Q10.500-2.500 20 6.500M4 9.500Q10.500 3 17 9.500M7 12.500Q10.500 9 14 12.500" fill="none" stroke="currentColor" strokeWidth="1.500" /><circle cx="10.500" cy="15" r="1.500" fill="currentColor" />
        </svg>
        <svg width="21" height="18" viewBox="0 0 21 18" className="ml-[9px]">
          <path d="M1 6.500h3.500L9 2v14l-4.500-4.500H1z" fill="none" stroke="currentColor" strokeWidth="1.300" /><path d="M12 6q2 3 0 6M15 4q3.500 5 0 10M17.500 2q5 7 0 14" fill="none" stroke="currentColor" strokeWidth="1.300" />
        </svg>
        <svg width="21" height="18" viewBox="0 0 21 18" className="ml-[9px]">
          <rect x="4.500" y="5.500" width="13.500" height="9" rx="1.500" fill="#444" stroke="currentColor" strokeWidth="1.600" /><path d="M20 8v4" stroke="currentColor" strokeWidth="1.500" /><path d="M5 0L0 8h3l-1 6l6-8H5z" fill="currentColor" />
        </svg>
        <span className="mt-[21px] ml-[21px] w-[9px] font-['Noto_Sans'] text-[14px] leading-none">20</span>
      </div>
    </div>
  );
}

function StatusBar() {
  const cell = "flex h-[20px] shrink-0 items-center overflow-hidden border-t border-l border-[#a0a0a0] pt-[1px] whitespace-nowrap";
  return (
    <div className="flex h-[24px] shrink-0 items-center border-b-2 border-[#b9adad] bg-[#f0f0f0] pt-[1px] text-[14px] tracking-[-0.350px] text-black">
      <div className={clsx(cell, "ml-[1px] w-[499px] pl-[1px]")}>Visualizar Menu do Módulo de Estoque</div>
      <div className={clsx(cell, "ml-[3px] w-[97px] tracking-[-0.150px]")}>WILSON.SILVA</div>
      <div className={clsx(cell, "ml-[4px] w-[621px] justify-center")}>ESCRITORIO MATRIZ - CELSO GRIESANG E OUTRO - PEDRA PRETA (TROPICAL)</div>
      <div className={clsx(cell, "ml-[4px] w-[122px] justify-center pr-[2px]")}>2024/2025</div>
      <div className={clsx(cell, "ml-[3px] w-[560px] justify-center")}>13:56:04 - 20/12/2024</div>
    </div>
  );
}

export default function App() {
  return (
    <div className="flex h-[1066px] w-[1798px] flex-col overflow-hidden bg-[#f0f0f0] font-['Liberation_Sans',Arial,sans-serif]">
      <div className="flex h-[29px] shrink-0 items-center justify-between bg-[#f3f3f3] pr-[21px] pl-[2px]">
        <div className="flex items-center">
          <AppIcon />
          <span className="ml-[5px] font-['Noto_Sans'] text-[14.250px] whitespace-nowrap text-[#8a8a8a]">
            Unisystem - Versão: 1.16.2024.27342 - AGNEW - By Unisystem® - [Lançamento de Notas Fiscais de Entrada]
          </span>
        </div>
        <div className="-mt-[3px] h-px w-[12px] bg-[#8a8a8a]" />
      </div>
      <Toolbar />
      <div className="h-[16px] shrink-0 border-t-3 border-b-2 border-t-[#f8f8f8] border-b-[#9a9a9a] bg-[#008080]" />
      <div className="relative flex h-[857px] shrink-0 overflow-hidden">
        <SideDock />
        <BackWindows />
        <QuoteWindow />
        <InvoiceWindow />
        <div className="absolute top-[31.500px] left-[649px] h-[804.500px] w-[1027px] border-5 border-[#e81c1c]" />
      </div>
      <div className="h-[14px] shrink-0 border-t border-b-2 border-t-[#d8d8d8] border-b-[#b0b0b0] bg-[#008080]" />
      <StatusBar />
      <Taskbar />
    </div>
  );
}
